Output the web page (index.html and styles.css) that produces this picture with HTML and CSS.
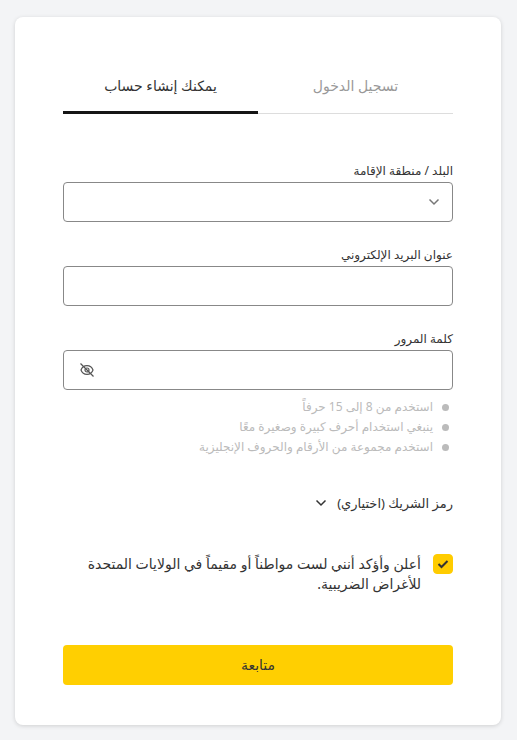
FILE: index.html
```html
<!DOCTYPE html>
<html lang="ar" dir="rtl">
<head>
  <meta charset="UTF-8" />
  <meta name="viewport" content="width=device-width, initial-scale=1.0" />
  <title>إنشاء حساب</title>
  <link rel="stylesheet" href="styles.css">
</head>
<body>
  <main class="card">
    <nav class="tabs">
      <a href="#login" class="tab">تسجيل الدخول</a>
      <a href="#signup" class="tab active">يمكنك إنشاء حساب</a>
    </nav>

    <form class="form">
      <div class="field">
        <label for="country">البلد / منطقة الإقامة</label>
        <div class="control">
          <select id="country"><option value=""></option></select>
          <svg class="arrow" width="12" height="8" viewBox="0 0 12 8"><path d="M1.5 1.5L6 6l4.5-4.5" /></svg>
        </div>
      </div>

      <div class="field">
        <label for="email">عنوان البريد الإلكتروني</label>
        <div class="control">
          <input type="email" id="email">
        </div>
      </div>

      <div class="field">
        <label for="password">كلمة المرور</label>
        <div class="control">
          <input type="password" id="password">
          <button type="button" class="eye" aria-label="إظهار كلمة المرور">
            <svg width="16" height="16" viewBox="0 0 16 16"><path d="M2 8c1-2.900 3.200-4.400 6-4.400S13 5.100 14 8c-1 2.900-3.200 4.400-6 4.400S3 10.900 2 8z" /><circle cx="8" cy="8" r="2" /><path d="M1.500 1.500l13 13" /></svg>
          </button>
        </div>
      </div>

      <ul class="rules">
        <li>استخدم من 8 إلى 15 حرفاً</li>
        <li>ينبغي استخدام أحرف كبيرة وصغيرة معًا</li>
        <li>استخدم مجموعة من الأرقام والحروف الإنجليزية</li>
      </ul>

      <button type="button" class="partner">
        رمز الشريك (اختياري)
        <svg width="12" height="8" viewBox="0 0 12 8"><path d="M1.5 1.5L6 6l4.5-4.5" /></svg>
      </button>

      <div class="declare">
        <span class="check">
          <input type="checkbox" id="declare" checked>
          <svg width="12" height="10" viewBox="0 0 12 10"><path d="M1.500 5l3 3L10.500 2" /></svg>
        </span>
        <label for="declare">أعلن وأؤكد أنني لست مواطناً أو مقيماً في الولايات المتحدة للأغراض الضريبية.</label>
      </div>

      <button type="submit" class="submit">متابعة</button>
    </form>
  </main>
</body>
</html>
```
FILE: styles.css
```css
* {
  box-sizing: border-box;
}
body {
  margin: 0;
  padding: 17px 16px 15px 15px;
  background: #f3f4f6;
  color: #333;
  font-family: "Noto Sans", "DejaVu Sans", sans-serif;
  font-size: 14px;
  line-height: 20px;
}
button, input, select {
  font: inherit;
  color: inherit;
}
svg {
  fill: none;
  stroke: currentColor;
  stroke-width: 1.5;
}
.card {
  padding: 47px 48px 40px;
  background: #fff;
  border-radius: 8px;
  box-shadow: 0 1px 4px rgba(0, 0, 0, 0.15);
}
.tabs {
  display: flex;
  border-bottom: 1px solid #ddd;
}
.tab {
  flex: 1;
  padding: 12px 0 15px;
  text-align: center;
  text-decoration: none;
  color: #999;
}
.tab.active {
  margin-bottom: -1px;
  border-bottom: 3px solid #151515;
  color: #333;
}
.form {
  padding-top: 48px;
}
.field {
  margin-bottom: 24px;
}
.field label {
  display: block;
  margin-bottom: 2px;
  font-size: 12px;
  line-height: 18px;
}
.control {
  position: relative;
}
.control input, .control select {
  display: block;
  width: 100%;
  height: 40px;
  padding: 0 12px;
  border: 1px solid #888;
  border-radius: 4px;
  background: #fff;
  appearance: none;
}
.control input {
  padding-left: 40px;
}
.arrow {
  position: absolute;
  top: 16px;
  right: 13px;
  color: #777;
  pointer-events: none;
}
.eye {
  position: absolute;
  top: 12px;
  left: 16px;
  padding: 0;
  border: 0;
  background: none;
  color: #555;
  line-height: 0;
}
.eye svg {
  stroke-width: 1.2;
}
.rules {
  margin: -17px 0 36px;
  padding: 0;
  list-style: none;
  font-size: 12px;
  color: #bbb;
}
.rules li {
  display: flex;
  align-items: center;
  gap: 9px;
  padding-right: 4px;
}
.rules li::before {
  content: "";
  width: 7px;
  height: 7px;
  border-radius: 50%;
  background: #bbb;
}
.partner {
  display: flex;
  align-items: center;
  gap: 10px;
  padding: 0;
  border: 0;
  background: none;
  font-size: 13px;
}
.declare {
  display: flex;
  gap: 12px;
  margin: 41px 0 51px;
}
.check {
  position: relative;
  flex: none;
  width: 20px;
  height: 20px;
}
.check input {
  display: block;
  width: 20px;
  height: 20px;
  margin: 0;
  appearance: none;
  border: 1px solid #888;
  border-radius: 4px;
}
.check input:checked {
  border-color: #fc0;
  background: #fc0;
}
.check svg {
  position: absolute;
  top: 5px;
  left: 4px;
  stroke-width: 2;
  pointer-events: none;
}
.check input:not(:checked) + svg {
  display: none;
}
.submit {
  width: 100%;
  height: 40px;
  border: 0;
  border-radius: 4px;
  background: #ffcf01;
}
```
